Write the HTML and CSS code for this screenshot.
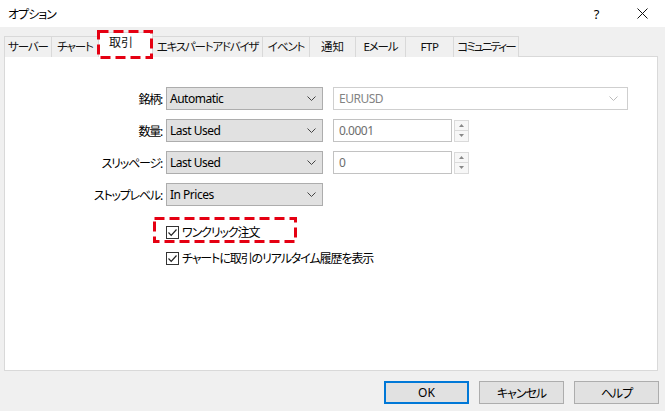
FILE: index.html
```html
<!DOCTYPE html>
<html lang="ja">
<head>
    <meta charset="UTF-8">
    <title>オプション</title>
    <link rel="stylesheet" href="styles.css">
</head>
<body>
    <div class="Ventana">
        <header class="Titulo">
            <span class="Titulo-texto">オプション</span>
            <div class="Controles">
                <span class="Control">?</span>
                <span class="Control">
                    <svg width="11" height="11" viewBox="0 0 11 11"><path d="M0.5 0.5 L10.5 10.5 M10.5 0.5 L0.5 10.5" stroke="#111" stroke-width="1" fill="none"/></svg>
                </span>
            </div>
        </header>

        <nav class="Pestanas">
            <div class="Pestana">サーバー</div>
            <div class="Pestana">チャート</div>
            <div class="Pestana Activa">取引
                <svg class="Marca Marca-tab" width="56" height="29"><rect x="1.5" y="1.5" width="53" height="26" fill="none" stroke="#e50012" stroke-width="3" stroke-dasharray="10 5"/></svg>
            </div>
            <div class="Pestana">エキスパートアドバイザ</div>
            <div class="Pestana">イベント</div>
            <div class="Pestana">通知</div>
            <div class="Pestana">Eメール</div>
            <div class="Pestana Latina">FTP</div>
            <div class="Pestana">コミュニティー</div>
        </nav>

        <main class="Panel">
            <div class="Formulario">
                <div class="Fila">
                    <span class="Etiqueta">銘柄:</span>
                    <div class="Select">Automatic
                        <svg class="Flecha" width="9" height="5" viewBox="0 0 9 5"><path d="M0.5 0.5 L4.5 4.5 L8.5 0.5" stroke="#444" fill="none"/></svg>
                    </div>
                    <div class="Combo">EURUSD
                        <svg class="Flecha" width="9" height="5" viewBox="0 0 9 5"><path d="M0.5 0.5 L4.5 4.5 L8.5 0.5" stroke="#bbb" fill="none"/></svg>
                    </div>
                </div>
                <div class="Fila">
                    <span class="Etiqueta">数量:</span>
                    <div class="Select">Last Used
                        <svg class="Flecha" width="9" height="5" viewBox="0 0 9 5"><path d="M0.5 0.5 L4.5 4.5 L8.5 0.5" stroke="#444" fill="none"/></svg>
                    </div>
                    <div class="Numero">0.0001</div>
                    <div class="Giro">
                        <span class="Giro-btn"><svg width="5" height="3" viewBox="0 0 5 3"><path d="M0 3 L2.5 0 L5 3 Z" fill="#888"/></svg></span>
                        <span class="Giro-btn"><svg width="5" height="3" viewBox="0 0 5 3"><path d="M0 0 L2.5 3 L5 0 Z" fill="#888"/></svg></span>
                    </div>
                </div>
                <div class="Fila">
                    <span class="Etiqueta">スリッページ:</span>
                    <div class="Select">Last Used
                        <svg class="Flecha" width="9" height="5" viewBox="0 0 9 5"><path d="M0.5 0.5 L4.5 4.5 L8.5 0.5" stroke="#444" fill="none"/></svg>
                    </div>
                    <div class="Numero">0</div>
                    <div class="Giro">
                        <span class="Giro-btn"><svg width="5" height="3" viewBox="0 0 5 3"><path d="M0 3 L2.5 0 L5 3 Z" fill="#888"/></svg></span>
                        <span class="Giro-btn"><svg width="5" height="3" viewBox="0 0 5 3"><path d="M0 0 L2.5 3 L5 0 Z" fill="#888"/></svg></span>
                    </div>
                </div>
                <div class="Fila">
                    <span class="Etiqueta">ストップレベル:</span>
                    <div class="Select">In Prices
                        <svg class="Flecha" width="9" height="5" viewBox="0 0 9 5"><path d="M0.5 0.5 L4.5 4.5 L8.5 0.5" stroke="#444" fill="none"/></svg>
                    </div>
                </div>
            </div>

            <div class="Casillas">
                <div class="Casilla">
                    <span class="Caja"><svg width="11" height="11" viewBox="0 0 11 11"><path d="M1.5 5.5 L4.2 8.3 L9.5 2.5" stroke="#222" stroke-width="1.2" fill="none"/></svg></span>
                    ワンクリック注文
                    <svg class="Marca Marca-check" width="144" height="26"><rect x="1.5" y="1.5" width="141" height="23" fill="none" stroke="#e50012" stroke-width="3" stroke-dasharray="10 5"/></svg>
                </div>
                <div class="Casilla">
                    <span class="Caja"><svg width="11" height="11" viewBox="0 0 11 11"><path d="M1.5 5.5 L4.2 8.3 L9.5 2.5" stroke="#222" stroke-width="1.2" fill="none"/></svg></span>
                    チャートに取引のリアルタイム履歴を表示
                </div>
            </div>
        </main>

        <footer class="Botones">
            <button class="Boton Principal">OK</button>
            <button class="Boton">キャンセル</button>
            <button class="Boton">ヘルプ</button>
        </footer>
    </div>
</body>
</html>
```

FILE: styles.css
```css
body {
    margin: 0;
    font-family: "Noto Sans", "Noto Sans CJK JP", sans-serif;
    font-size: 12px;
    font-feature-settings: "palt";
    color: #000;
}

.Ventana {
    width: 665px;
    height: 411px;
    background: #f0f0f0;
    display: flex;
    flex-direction: column;
    overflow: hidden;
}

.Ventana > * {
    flex-shrink: 0;
}

.Titulo {
    height: 27px;
    background: #fff;
    display: flex;
    align-items: center;
    justify-content: space-between;
    padding-left: 8px;
    letter-spacing: -1px;
}

.Controles {
    display: flex;
    height: 100%;
}

.Control {
    width: 46px;
    display: flex;
    align-items: center;
    justify-content: center;
    font-size: 13px;
}

/* pestañas */
.Pestanas {
    display: flex;
    align-items: flex-end;
    height: 24px;
    margin-top: 6px;
    padding-left: 4px;
    position: relative;
    z-index: 1;
    margin-bottom: -1px;
}

.Pestana {
    box-sizing: border-box;
    height: 21px;
    line-height: 20px;
    text-align: center;
    border: 1px solid #d9d9d9;
    border-bottom: none;
    margin-right: -1px;
    background: #f0f0f0;
    white-space: nowrap;
    font-size: 11.5px;
    letter-spacing: -1.1px;
    color: #111;
}

.Pestana:nth-child(1) { width: 48px; }
.Pestana:nth-child(2) { width: 48px; }
.Pestana:nth-child(4) { width: 111px; letter-spacing: -1.2px; }
.Pestana:nth-child(5) { width: 48px; }
.Pestana:nth-child(6) { width: 47px; letter-spacing: 0; }
.Pestana:nth-child(7) { width: 51px; }
.Pestana:nth-child(8) { width: 49px; }
.Pestana:nth-child(9) { width: 66px; letter-spacing: -1.9px; }

.Latina {
    letter-spacing: -0.4px;
}

.Activa {
    position: relative;
    width: 55px;
    height: 25px;
    text-align: left;
    padding-left: 10px;
    background: #fff;
    font-size: 12px;
    letter-spacing: 0;
    z-index: 2;
}

.Marca {
    position: absolute;
    pointer-events: none;
}

.Marca-tab {
    left: -2px;
    top: -3px;
}

/* panel */
.Panel {
    height: 283px;
    margin: 0 7px 0 4px;
    border: 1px solid #d9d9d9;
    background: #fff;
    padding-top: 30px;
}

.Formulario {
    display: flex;
    flex-direction: column;
    gap: 9px;
}

.Fila {
    display: flex;
    align-items: center;
    height: 23px;
}

.Etiqueta {
    width: 161px;
    padding-right: 4px;
    box-sizing: border-box;
    text-align: right;
    letter-spacing: -1.2px;
    white-space: nowrap;
}

.Select {
    width: 157px;
    height: 23px;
    box-sizing: border-box;
    border: 1px solid #adadad;
    background: #e1e1e1;
    padding-left: 3px;
    display: flex;
    align-items: center;
    justify-content: space-between;
    padding-right: 6px;
    letter-spacing: -0.5px;
}

.Combo {
    margin-left: 10px;
    width: 295px;
    height: 23px;
    box-sizing: border-box;
    border: 1px solid #cfcfcf;
    color: #838383;
    padding: 0 9px 0 5px;
    display: flex;
    align-items: center;
    justify-content: space-between;
    letter-spacing: -0.5px;
}

.Numero {
    margin-left: 10px;
    width: 119px;
    height: 23px;
    box-sizing: border-box;
    border: 1px solid #c2c2c2;
    color: #6d6d6d;
    padding-left: 5px;
    display: flex;
    align-items: center;
    letter-spacing: -0.5px;
}

.Giro {
    margin-left: 2px;
    width: 15px;
    height: 22px;
    display: flex;
    flex-direction: column;
}

.Giro-btn {
    flex: 1;
    border: 1px solid #dadada;
    background: #f7f7f7;
    display: flex;
    align-items: center;
    justify-content: center;
}

.Giro-btn + .Giro-btn {
    border-top: none;
}

/* casillas */
.Casillas {
    display: flex;
    flex-direction: column;
    gap: 6px;
    margin-top: 16px;
    padding-left: 161px;
}

.Casilla {
    position: relative;
    height: 20px;
    display: flex;
    align-items: center;
    gap: 3px;
    letter-spacing: -1.1px;
}

.Caja {
    width: 13px;
    height: 13px;
    box-sizing: border-box;
    border: 1px solid #333;
    background: #fff;
    display: flex;
    align-items: center;
    justify-content: center;
}

.Marca-check {
    left: -13px;
    top: -5px;
}

/* botones */
.Botones {
    display: flex;
    justify-content: flex-end;
    gap: 10px;
    margin-top: 10px;
    padding-right: 6px;
}

.Boton {
    width: 85px;
    height: 23px;
    font-family: inherit;
    font-size: 12px;
    font-feature-settings: "palt";
    letter-spacing: -1px;
    background: #e1e1e1;
    border: 1px solid #adadad;
    padding: 0;
    color: #000;
}

.Principal {
    border: 2px solid #0078d7;
    letter-spacing: 0;
}
```
